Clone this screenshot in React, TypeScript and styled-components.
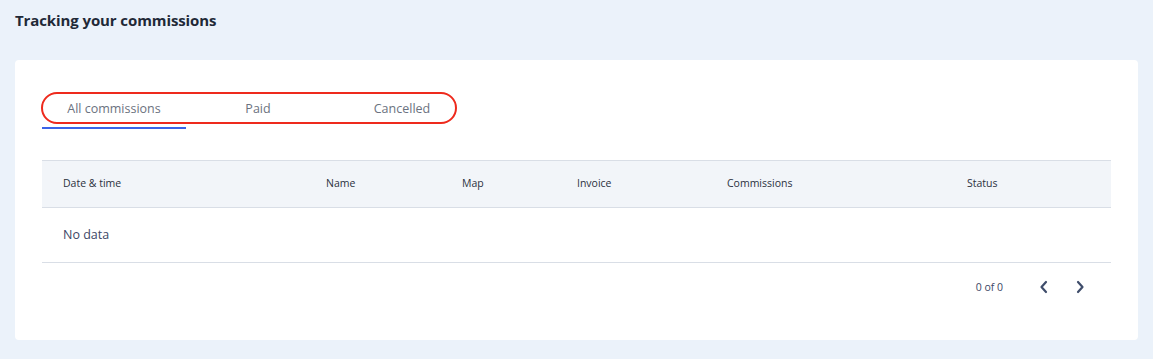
import React from "react";
import styled, { createGlobalStyle } from "styled-components";

const Global = createGlobalStyle`
  html, body { margin: 0; padding: 0; background: #ebf2fa; }
  body { font-family: "Open Sans", "Noto Sans", sans-serif; }
`;

const Page = styled.div`
  width: 1153px;
  height: 359px;
  box-sizing: border-box;
  padding: 9px 15px 0 15px;
  background: #ebf2fa;
`;

const Title = styled.h1`
  margin: 0;
  height: 22px;
  font-size: 15px;
  line-height: 22px;
  font-weight: 700;
  letter-spacing: -0.1px;
  color: #1f2937;
`;

const Card = styled.div`
  margin-top: 29px;
  width: 1123px;
  height: 280px;
  box-sizing: border-box;
  background: #fff;
  border-radius: 4px;
  padding: 32px 27px 0 27px;
`;

const TabBar = styled.div`
  position: relative;
  display: flex;
  height: 37px;
`;

const Tab = styled.button<{ $active?: boolean }>`
  width: 144px;
  height: 37px;
  padding: 0 0 2px;
  border: none;
  background: transparent;
  font-family: inherit;
  font-size: 12.5px;
  color: #6b7280;
  border-bottom: 2px solid ${(p) => (p.$active ? "#3b63e8" : "transparent")};
  box-sizing: border-box;
  cursor: pointer;
`;

const Highlight = styled.span`
  position: absolute;
  left: -1px;
  top: 0;
  width: 416px;
  height: 32px;
  box-sizing: border-box;
  border: 2px solid #ee2a1d;
  border-radius: 16px;
  pointer-events: none;
`;

const Table = styled.div`
  margin-top: 31px;
`;

const cols = "263px 136px 115px 150px 240px 165px";

const HeadRow = styled.div`
  display: grid;
  grid-template-columns: ${cols};
  height: 48px;
  padding-bottom: 3px;
  align-items: center;
  background: #f2f5f9;
  border-top: 1px solid #d9dee6;
  border-bottom: 1px solid #d9dee6;
  box-sizing: border-box;
`;

const HeadCell = styled.div`
  padding-left: 21px;
  font-size: 10.5px;
  color: #2b3140;
`;

const EmptyRow = styled.div`
  height: 55px;
  display: flex;
  align-items: center;
  padding-left: 21px;
  padding-bottom: 2px;
  font-size: 12.5px;
  color: #3c4766;
  border-bottom: 1px solid #d9dee6;
  box-sizing: border-box;
`;

const Pager = styled.div`
  display: flex;
  align-items: center;
  justify-content: flex-end;
  height: 49px;
  padding-right: 13px;
  padding-bottom: 1px;
  box-sizing: border-box;
`;

const PageText = styled.span`
  font-size: 10.5px;
  color: #3c4766;
  margin-right: 23px;
`;

const NavButton = styled.button`
  width: 36px;
  height: 24px;
  border: none;
  background: transparent;
  padding: 0;
  display: flex;
  align-items: center;
  justify-content: center;
  cursor: pointer;
`;

const Chevron = ({ dir }: { dir: "left" | "right" }) => (
  <svg width="12" height="14" viewBox="0 0 12 14" fill="none">
    <path
      d={dir === "left" ? "M8 2 L3.5 7 L8 12" : "M4 2 L8.5 7 L4 12"}
      stroke="#3f4d6b"
      strokeWidth="2.2"
      strokeLinecap="round"
      strokeLinejoin="round"
    />
  </svg>
);

const headers = ["Date & time", "Name", "Map", "Invoice", "Commissions", "Status"];

export default function App() {
  return (
    <Page>
      <Global />
      <Title>Tracking your commissions</Title>
      <Card>
        <TabBar>
          <Tab $active>All commissions</Tab>
          <Tab>Paid</Tab>
          <Tab>Cancelled</Tab>
          <Highlight />
        </TabBar>
        <Table>
          <HeadRow>
            {headers.map((h) => (
              <HeadCell key={h}>{h}</HeadCell>
            ))}
          </HeadRow>
          <EmptyRow>No data</EmptyRow>
        </Table>
        <Pager>
          <PageText>0 of 0</PageText>
          <NavButton>
            <Chevron dir="left" />
          </NavButton>
          <NavButton>
            <Chevron dir="right" />
          </NavButton>
        </Pager>
      </Card>
    </Page>
  );
}
